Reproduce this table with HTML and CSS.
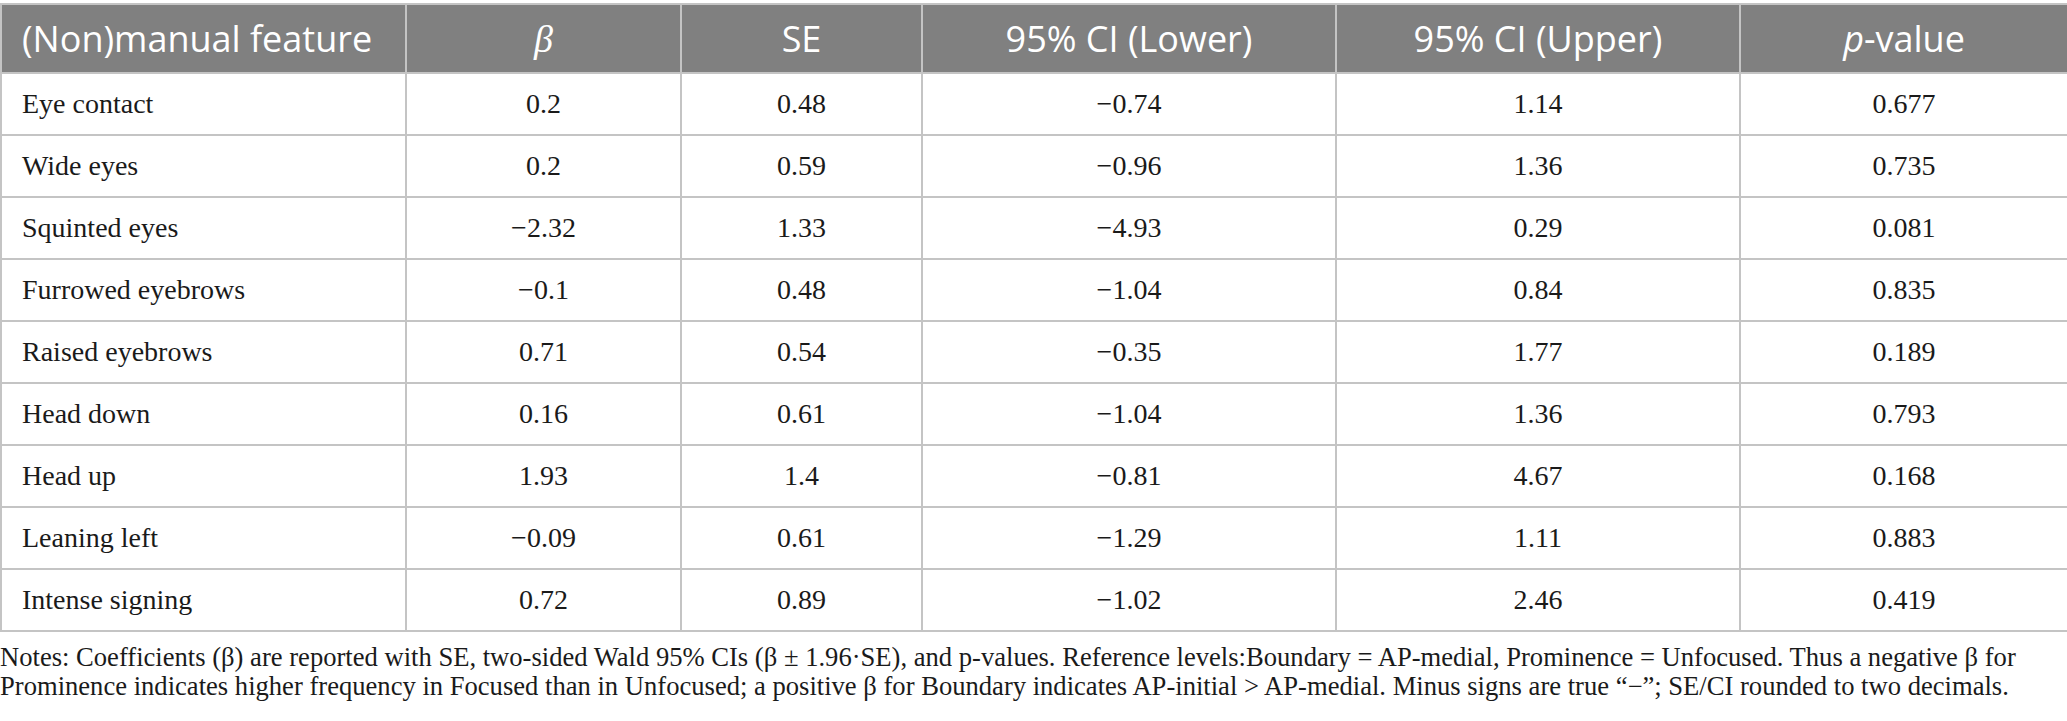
FILE: index.html
```html
<!DOCTYPE html>
<html lang="en">
<head>
<meta charset="utf-8">
<title>Table</title>
<link rel="stylesheet" href="styles.css">
</head>
<body>
<div class="wrap">
<table class="data">
  <colgroup>
    <col class="c1"><col class="c2"><col class="c3"><col class="c4"><col class="c5"><col class="c6">
  </colgroup>
  <thead>
    <tr>
      <th class="first">(Non)manual feature</th>
      <th><span class="beta">β</span></th>
      <th>SE</th>
      <th>95% CI (Lower)</th>
      <th>95% CI (Upper)</th>
      <th><span class="pit">p</span>-value</th>
    </tr>
  </thead>
  <tbody>
    <tr><td class="first">Eye contact</td><td>0.2</td><td>0.48</td><td>−0.74</td><td>1.14</td><td>0.677</td></tr>
    <tr><td class="first">Wide eyes</td><td>0.2</td><td>0.59</td><td>−0.96</td><td>1.36</td><td>0.735</td></tr>
    <tr><td class="first">Squinted eyes</td><td>−2.32</td><td>1.33</td><td>−4.93</td><td>0.29</td><td>0.081</td></tr>
    <tr><td class="first">Furrowed eyebrows</td><td>−0.1</td><td>0.48</td><td>−1.04</td><td>0.84</td><td>0.835</td></tr>
    <tr><td class="first">Raised eyebrows</td><td>0.71</td><td>0.54</td><td>−0.35</td><td>1.77</td><td>0.189</td></tr>
    <tr><td class="first">Head down</td><td>0.16</td><td>0.61</td><td>−1.04</td><td>1.36</td><td>0.793</td></tr>
    <tr><td class="first">Head up</td><td>1.93</td><td>1.4</td><td>−0.81</td><td>4.67</td><td>0.168</td></tr>
    <tr><td class="first">Leaning left</td><td>−0.09</td><td>0.61</td><td>−1.29</td><td>1.11</td><td>0.883</td></tr>
    <tr><td class="first">Intense signing</td><td>0.72</td><td>0.89</td><td>−1.02</td><td>2.46</td><td>0.419</td></tr>
  </tbody>
</table>
<p class="notes">Notes: Coefficients (β) are reported with SE, two-sided Wald 95% CIs (β ± 1.96·SE), and p-values. Reference levels:Boundary = AP-medial, Prominence = Unfocused. Thus a negative β for Prominence indicates higher frequency in Focused than in Unfocused; a positive β for Boundary indicates AP-initial &gt; AP-medial. Minus signs are true “−”; SE/CI rounded to two decimals.</p>
</div>
</body>
</html>
```
FILE: styles.css
```css
html, body {
  margin: 0;
  padding: 0;
  background: #ffffff;
}

.wrap {
  padding-top: 3px;
  width: 2067px;
}

.data {
  width: 2067px;
  border-collapse: collapse;
  table-layout: fixed;
  font-family: "Liberation Serif", "Times New Roman", serif;
  font-size: 28px;
  color: #1a1a1a;
}

.c1 { width: 405px; }
.c2 { width: 275px; }
.c3 { width: 241px; }
.c4 { width: 414px; }
.c5 { width: 404px; }
.c6 { width: 328px; }

.data th {
  background: #808080;
  color: #ffffff;
  font-family: "Open Sans", "Noto Sans", sans-serif;
  font-weight: 400;
  font-size: 36px;
  height: 67px;
  padding: 0 20px;
  border: 2px solid #c4c4c4;
  text-align: center;
  vertical-align: middle;
  line-height: 1;
}

.data td {
  height: 60px;
  padding: 0 20px;
  border: 2px solid #c4c4c4;
  text-align: center;
  vertical-align: middle;
  line-height: 1;
  font-family: "Liberation Serif", "Times New Roman", serif;
}

.data .first {
  text-align: left;
}

.beta {
  font-family: "Liberation Serif", "Times New Roman", serif;
  font-style: italic;
  font-size: 38px;
}

.pit {
  font-style: italic;
}

.notes {
  margin: 11px 0 0 0;
  padding-right: 10px;
  font-family: "Liberation Serif", "Times New Roman", serif;
  font-size: 26.6px;
  line-height: 29px;
  color: #1a1a1a;
}
```
